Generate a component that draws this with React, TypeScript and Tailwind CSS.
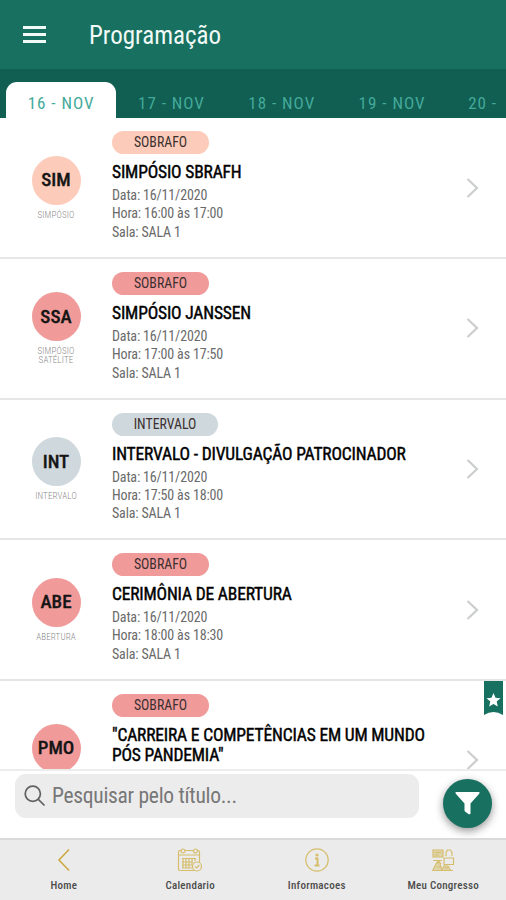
import type { ReactNode } from "react";

type Session = {
  code: string;
  kind: string[];
  tag: string;
  title: string[];
  time?: string;
  tone: string;
  tagWidth: string;
  height: string;
  starred?: boolean;
};

const sessions: Session[] = [
  { code: "SIM", kind: ["SIMPÓSIO"], tag: "SOBRAFO", title: ["SIMPÓSIO SBRAFH"], time: "16:00 às 17:00", tone: "bg-[#fdcbb9]", tagWidth: "w-[97px]", height: "h-[141px]" },
  { code: "SSA", kind: ["SIMPÓSIO", "SATÉLITE"], tag: "SOBRAFO", title: ["SIMPÓSIO JANSSEN"], time: "17:00 às 17:50", tone: "bg-[#f09a9a]", tagWidth: "w-[97px]", height: "h-[140.5px]" },
  { code: "INT", kind: ["INTERVALO"], tag: "INTERVALO", title: ["INTERVALO - DIVULGAÇÃO PATROCINADOR"], time: "17:50 às 18:00", tone: "bg-[#cfd8dc]", tagWidth: "w-[106px]", height: "h-[140.5px]" },
  { code: "ABE", kind: ["ABERTURA"], tag: "SOBRAFO", title: ["CERIMÔNIA DE ABERTURA"], time: "18:00 às 18:30", tone: "bg-[#f09a9a]", tagWidth: "w-[97px]", height: "h-[141px]" },
  { code: "PMO", kind: [], tag: "SOBRAFO", title: ['"CARREIRA E COMPETÊNCIAS EM UM MUNDO', 'PÓS PANDEMIA"'], tone: "bg-[#f09a9a]", tagWidth: "w-[97px]", height: "h-[160px]", starred: true },
];

function Row({ s }: { s: Session }) {
  return (
    <li className={`relative flex shrink-0 border-b-2 border-[#e6e6e6] ${s.height}`}>
      <div className="flex w-[112px] shrink-0 flex-col items-center justify-center pt-[1px]">
        <div className={`flex size-[49px] items-center justify-center rounded-full text-[19px] font-medium text-[#151515] [-webkit-text-stroke:0.3px_#151515] ${s.tone}`}>
          {s.code}
        </div>
        <div className={`mt-[6px] text-center text-[9px] leading-[9px] font-light tracking-[0.15px] text-[#8a8a8a] ${s.kind.length ? "" : "h-[19px]"}`}>
          {s.kind.map((k) => <div key={k}>{k}</div>)}
        </div>
      </div>
      <div className="flex-1 pt-[13px]">
        <div className={`flex h-[23px] items-center justify-center rounded-full text-[13.8px] text-[#3b3030] ${s.tone} ${s.tagWidth}`}>{s.tag}</div>
        <h2 className="mt-[8px] text-[17.5px] leading-[20px] font-normal tracking-[-0.18px] whitespace-nowrap text-black [-webkit-text-stroke:0.4px_#000]">
          {s.title.map((t) => <div key={t}>{t}</div>)}
        </h2>
        {s.time && (
          <div className="mt-[4px] text-[14px] leading-[18.3px] tracking-[-0.16px] text-[#6a6a6a]">
            <p>Data: 16/11/2020</p>
            <p>Hora: {s.time}</p>
            <p>Sala: SALA 1</p>
          </div>
        )}
      </div>
      <div className="flex w-[40px] items-center">
        <svg width="13" height="20" viewBox="0 0 13 20" fill="none" stroke="#cbcdce" strokeWidth="2.2"><path d="M1.5 1L11 10L1.5 19" /></svg>
      </div>
      {s.starred && (
        <svg className="absolute top-0 right-[3px]" width="19" height="34" viewBox="0 0 19 34">
          <path d="M0 0H19V34Q9.500 28 0 34Z" fill="#187060" />
          <path d="M9.500 12l2 4.800 5 .4-3.800 3.400 1.100 5-4.300-2.600-4.300 2.600 1.100-5-3.800-3.400 5-.4z" fill="#fff" />
        </svg>
      )}
    </li>
  );
}

function NavItem({ label, children }: { label: string; children: ReactNode }) {
  return (
    <a className="flex w-[126.5px] flex-col items-center pt-[7px] pl-[1px] text-[11px] font-medium tracking-[0.25px] text-[#4c4c4c]">
      <svg width="26" height="26" viewBox="0 0 26 26" fill="none" stroke="#d6bd6c" strokeWidth="1.2">{children}</svg>
      <span className="mt-[5px] leading-[16px] whitespace-nowrap">{label}</span>
    </a>
  );
}

export default function App() {
  return (
    <div className="flex h-[900px] w-[506px] flex-col overflow-hidden bg-white font-['Roboto_Condensed','Roboto',sans-serif] font-stretch-75%">
      <header className="flex h-[69px] shrink-0 items-center bg-[#187060] text-[#f1faf7]">
        <svg className="ml-[23px]" width="23" height="17" viewBox="0 0 23 17" fill="currentColor"><path d="M0 0h23v3H0zM0 7h23v3H0zM0 14h23v3H0z" /></svg>
        <h1 className="ml-[43px] pt-[2px] text-[25px] leading-[30px]">Programação</h1>
      </header>
      <nav className="flex h-[49px] shrink-0 items-end overflow-hidden bg-[#115e52] pl-[6px] text-[17px] tracking-[1px] text-[#43aa9a]">
        {["16 - NOV", "17 - NOV", "18 - NOV", "19 - NOV"].map((d, i) => (
          <div key={d} className={`flex h-[36px] w-[110.3px] shrink-0 items-center justify-center whitespace-nowrap pt-[7px] ${i === 0 ? "rounded-t-[11px] bg-white" : ""}`}>{d}</div>
        ))}
        <div className="flex h-[36px] items-center pt-[7px] pl-[21px] whitespace-nowrap">20 -</div>
      </nav>
      <ul className="flex h-[651px] shrink-0 flex-col overflow-hidden">
        {sessions.map((s) => <Row key={s.code} s={s} />)}
      </ul>
      <div className="flex h-[69px] shrink-0 border-t-2 border-[#ececec] bg-white pt-[3px] pl-[15px]">
        <div className="flex h-[44px] w-[404px] items-center rounded-[11px] bg-[#ececec] pl-[9px] text-[21.5px] text-[#777]">
          <svg width="22" height="22" viewBox="0 0 22 22" fill="none" stroke="#616161" strokeWidth="1.700"><circle cx="8.800" cy="8.800" r="7.600" /><path d="M14.300 14.300L20.500 20.500" /></svg>
          <span className="ml-[6px] tracking-[-0.28px]">Pesquisar pelo título...</span>
        </div>
        <button className="mt-[5px] ml-[24px] flex size-[49px] items-center justify-center rounded-full bg-[#187060] shadow-[0_3px_8px_rgba(0,0,0,.42)]">
          <svg width="25" height="23" viewBox="0 0 25 23" fill="#fff"><path d="M.8 0H24.200Q25 .8 24.200 1.800L15.500 11.500V21.500Q15 22.700 13.800 22.200L10 19.500Q9.500 19 9.500 18.300V11.500L.8 1.800Q0 .8.800 0Z" /></svg>
        </button>
      </div>
      <footer className="flex h-[62px] shrink-0 border-t-2 border-[#dadada] bg-[#ebebeb]">
        <NavItem label="Home"><path d="M18 2.500L8 13L18 23.500" stroke="#cba83c" strokeWidth="1.500" /></NavItem>
        <NavItem label="Calendario">
          <path d="M5 3.500H3a1.500 1.500 0 0 0-1.500 1.500V22A1.500 1.500 0 0 0 3 23.500H18M8 3.500H17M20 3.500H21A1.500 1.500 0 0 1 22.500 5V15M1.500 8H22.500" />
          <circle cx="6" cy="4" r="2" /><circle cx="18.500" cy="4" r="2" /><circle cx="20" cy="19.500" r="4.500" />
          <path d="M18 19.500l1.700 1.500 2.600-3M5 11.500H19M5 15H16M5 18H15M5 21H15M6 11V21M9 11V21M12 11V21M15 11V18M18 11V14" />
        </NavItem>
        <NavItem label="Informacoes"><circle cx="13" cy="13" r="11.200" /><circle cx="13" cy="8" r="1" fill="#d6bd6c" /><path d="M11 11.500H13.500V18M10.500 18.500H15.500" strokeWidth="2" /></NavItem>
        <NavItem label="Meu Congresso">
          <path d="M3 3H13V10H3ZM5 5.500H11M5 8H9M16 9V5.500L17.500 3H20.500L22 5.500V9M14 11H23.500V17.500H14V11M3 13.500H12M6 17L8.500 14L11 17M3 23L6 17H10L12 23M12 23L14 19H18L20.500 23M7 20H11M15 21H18M2 23.500H23" />
          <path d="M3 3H13V10H3ZM5 18H10L11 23H4ZM14 19H18L20 23H13Z" fill="#d6bd6c" fillOpacity=".5" stroke="none" />
        </NavItem>
      </footer>
    </div>
  );
}
